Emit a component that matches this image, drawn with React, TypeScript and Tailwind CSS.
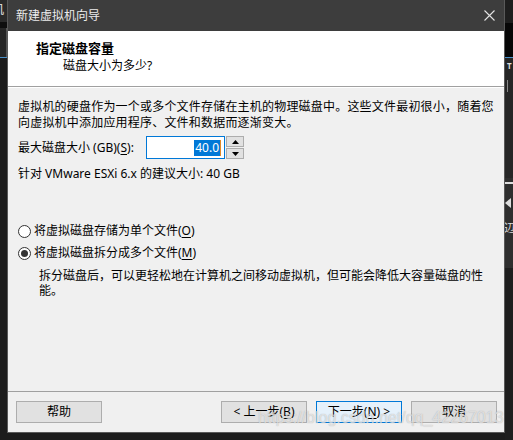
import { ReactNode } from 'react'

const FONT = "font-['Noto_Sans','Noto_Sans_CJK_SC',sans-serif]"

function Mnemonic({ children }: { children: ReactNode }) {
  return <span className="underline underline-offset-2">{children}</span>
}

function Radio({ checked, children }: { checked?: boolean; children: ReactNode }) {
  return (
    <label className="flex items-center h-[16px]">
      <span className="w-[13px] h-[13px] rounded-full border border-[#333] bg-white flex items-center justify-center">
        {checked && <span className="w-[7px] h-[7px] rounded-full bg-[#333]" />}
      </span>
      <span className="ml-[3px]">{children}</span>
    </label>
  )
}

function WizardButton({ children, primary }: { children: ReactNode; primary?: boolean }) {
  return (
    <button
      type="button"
      className={
        primary
          ? 'w-[86px] h-[22px] border border-[#0078d7] bg-[#e5f1fb] text-[12px] leading-none text-black'
          : 'w-[86px] h-[22px] border border-[#adadad] bg-[#e1e1e1] text-[12px] leading-none text-black'
      }
    >
      {children}
    </button>
  )
}

function SpinBox({ value }: { value: string }) {
  return (
    <div className="flex items-stretch h-[23px]">
      <div className="w-[79px] border border-[#0078d7] bg-white flex items-center justify-end pr-[3px]">
        <span className="bg-[#0078d7] text-white leading-[16px] px-[1px]">{value}</span>
        <span className="w-[1px] h-[16px] bg-[#e08a2a]" />
      </div>
      <div className="ml-[1px] w-[18px] flex flex-col gap-[1px]">
        <div className="flex-1 border border-[#adadad] bg-[#e1e1e1] flex items-center justify-center">
          <svg width="7" height="4" viewBox="0 0 7 4">
            <path d="M3.5 0 L7 4 L0 4 Z" fill="#000" />
          </svg>
        </div>
        <div className="flex-1 border border-[#adadad] bg-[#e1e1e1] flex items-center justify-center">
          <svg width="7" height="4" viewBox="0 0 7 4">
            <path d="M0 0 L7 0 L3.5 4 Z" fill="#000" />
          </svg>
        </div>
      </div>
    </div>
  )
}

export default function App() {
  return (
    <div className={`w-[513px] h-[440px] bg-[#1c1c1c] flex overflow-hidden relative ${FONT}`}>
      {/* desktop behind the dialog, left edge */}
      <div className="w-[7px] flex flex-col overflow-hidden">
        <div className="h-[22px] bg-[#2a2a2a] overflow-hidden">
          <span className="block -ml-[8px] text-[12px] leading-[20px] text-[#e8e8e8]">机</span>
        </div>
        <div className="h-[6px] bg-[#0e0e0e]" />
        <div className="h-[29px] bg-[#262626] border-r border-[#555]" />
        <div className="h-[1px] bg-[#4a90c8]" />
        <div className="flex-1 bg-[#1c1c1c]" />
      </div>

      {/* wizard dialog */}
      <div className="w-[498px] h-[433px] flex flex-col border-x border-b border-[#595959] bg-[#f0f0f0] text-[12px] text-black">
        <div className="h-[31px] bg-[#3d3d3d] flex items-center justify-between pl-[8px] pr-[9px]">
          <span className="text-[#ececec] text-[12px]">新建虚拟机向导</span>
          <svg width="11" height="11" viewBox="0 0 11 11">
            <path d="M0.5 0.5 L10.5 10.5 M10.5 0.5 L0.5 10.5" stroke="#e4e4e4" strokeWidth="1.1" />
          </svg>
        </div>

        <div className="h-[56px] bg-white border-b border-[#a0a0a0] pl-[28px] pt-[9px]">
          <div className="text-[13px] font-bold leading-[17px]">指定磁盘容量</div>
          <div className="pl-[27px] leading-[17px]">磁盘大小为多少?</div>
        </div>

        <div className="flex-1 border-t border-white px-[10px] pt-[11px] flex flex-col">
          <p className="leading-[16px] whitespace-nowrap tracking-[0.2px]">
            虚拟机的硬盘作为一个或多个文件存储在主机的物理磁盘中。这些文件最初很小，随着您
            <br />
            向虚拟机中添加应用程序、文件和数据而逐渐变大。
          </p>

          <div className="flex items-center mt-[5px]">
            <span className="w-[128px]">
              最大磁盘大小 (GB)(<Mnemonic>S</Mnemonic>):
            </span>
            <SpinBox value="40.0" />
          </div>

          <div className="leading-[16px] mt-[7px]">针对 VMware ESXi 6.x 的建议大小: 40 GB</div>

          <div className="mt-[41px] flex flex-col gap-[6px]">
            <Radio>
              将虚拟磁盘存储为单个文件(<Mnemonic>O</Mnemonic>)
            </Radio>
            <Radio checked>
              将虚拟磁盘拆分成多个文件(<Mnemonic>M</Mnemonic>)
            </Radio>
          </div>

          <p className="pl-[21px] mt-[7px] leading-[15px]">
            拆分磁盘后，可以更轻松地在计算机之间移动虚拟机，但可能会降低大容量磁盘的性
            <br />
            能。
          </p>
        </div>

        <div className="h-[41px] border-t border-[#a0a0a0] flex items-start pt-[9px] pl-[8px] pr-[7px]">
          <WizardButton>帮助</WizardButton>
          <div className="ml-auto flex gap-[9px]">
            <WizardButton>
              &lt; 上一步(<Mnemonic>B</Mnemonic>)
            </WizardButton>
            <WizardButton primary>
              下一步(<Mnemonic>N</Mnemonic>) &gt;
            </WizardButton>
            <WizardButton>取消</WizardButton>
          </div>
        </div>
      </div>

      {/* desktop behind the dialog, right edge */}
      <div className="flex-1 flex flex-col overflow-hidden">
        <div className="h-[23px] bg-[#1e1e1e]" />
        <div className="h-[34px] bg-[#070707]" />
        <div className="h-[1px] bg-[#4a90c8]" />
        <div className="h-[120px] bg-[#262626] pl-[2px] pt-[4px] flex flex-col gap-[10px]">
          <span className="text-[8px] font-bold leading-none text-[#ddd]">T</span>
          <span className="w-[6px] h-[12px] border-l border-[#888]" />
        </div>
        <div className="h-[90px] bg-[#2e2e2e] pt-[4px] flex flex-col gap-[14px]">
          <span className="w-[8px] h-[2px] bg-[#ddd]" />
          <span className="w-0 h-0 border-y-[5px] border-y-transparent border-r-[6px] border-r-[#ddd]" />
          <span className="text-[11px] leading-none text-[#ddd] -ml-[1px]">辺</span>
        </div>
        <div className="flex-1 bg-[#1e1e1e]" />
      </div>

      <span className="absolute left-[258px] top-[409px] font-['Liberation_Sans',sans-serif] text-[16px] leading-[18px] text-white/60 [text-shadow:0_0_1px_rgba(120,120,120,0.6)]">
        https://blog.csdn.net/qq_42267013
      </span>
    </div>
  )
}
